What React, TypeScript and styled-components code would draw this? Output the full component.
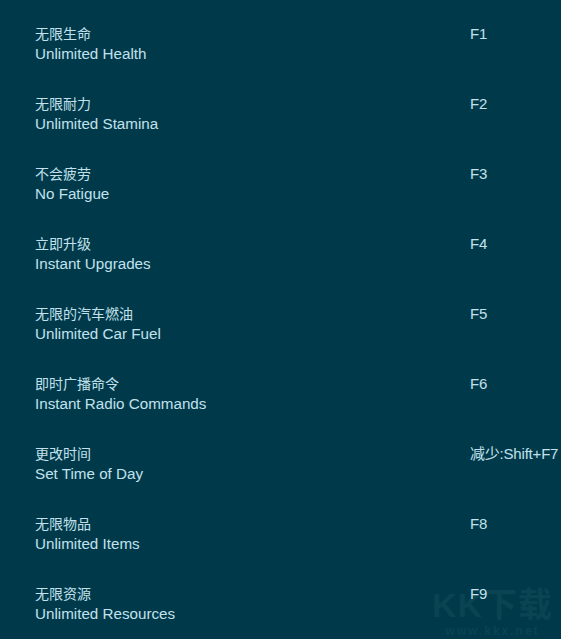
import React from "react";
import styled, { createGlobalStyle } from "styled-components";

const Global = createGlobalStyle`
  html, body { margin: 0; padding: 0; background: #003a4a; }
  body { width: 561px; height: 639px; overflow: hidden; }
`;

const Page = styled.div`
  position: relative;
  width: 561px;
  height: 639px;
  background: #003a4a;
  box-sizing: border-box;
  padding: 23px 0 0 35px;
  color: #c2e1ed;
`;

const List = styled.div`
  position: relative;
  z-index: 1;
  display: flex;
  flex-direction: column;
`;

const Row = styled.div`
  display: grid;
  grid-template-columns: 435px 1fr;
  height: 70px;
`;

const Names = styled.div`
  display: flex;
  flex-direction: column;
`;

const Cn = styled.div`
  font-family: "Noto Sans CJK SC", "Liberation Sans", sans-serif;
  font-size: 14px;
  line-height: 20px;
`;

const En = styled.div`
  font-family: "Liberation Sans", "Noto Sans CJK SC", sans-serif;
  font-size: 15.2px;
  line-height: 21px;
`;

const Key = styled.div`
  font-family: "Liberation Sans", "Noto Sans CJK SC", sans-serif;
  font-size: 15px;
  line-height: 21px;
  white-space: nowrap;
  letter-spacing: -0.2px;
`;

const Watermark = styled.div`
  position: absolute;
  z-index: 0;
  right: 8px;
  bottom: 1px;
  display: flex;
  flex-direction: column;
  align-items: center;
  color: #0a4352;
  font-family: "Liberation Sans", "Noto Sans CJK SC", sans-serif;
  font-weight: bold;
  pointer-events: none;
`;

const WmLogo = styled.div`
  font-size: 34px;
  line-height: 38px;
  letter-spacing: 1px;
`;

const WmUrl = styled.div`
  font-size: 12px;
  line-height: 14px;
  letter-spacing: 2px;
`;

const items = [
  ["无限生命", "Unlimited Health", "F1"],
  ["无限耐力", "Unlimited Stamina", "F2"],
  ["不会疲劳", "No Fatigue", "F3"],
  ["立即升级", "Instant Upgrades", "F4"],
  ["无限的汽车燃油", "Unlimited Car Fuel", "F5"],
  ["即时广播命令", "Instant Radio Commands", "F6"],
  ["更改时间", "Set Time of Day", "减少:Shift+F7"],
  ["无限物品", "Unlimited Items", "F8"],
  ["无限资源", "Unlimited Resources", "F9"],
];

export default function App() {
  return (
    <>
      <Global />
      <Page>
        <Watermark aria-hidden="true">
          <WmLogo>KK下载</WmLogo>
          <WmUrl>www.kkx.net</WmUrl>
        </Watermark>
        <List>
          {items.map(([cn, en, key]) => (
            <Row key={en}>
              <Names>
                <Cn>{cn}</Cn>
                <En>{en}</En>
              </Names>
              <Key>{key}</Key>
            </Row>
          ))}
        </List>
      </Page>
    </>
  );
}
